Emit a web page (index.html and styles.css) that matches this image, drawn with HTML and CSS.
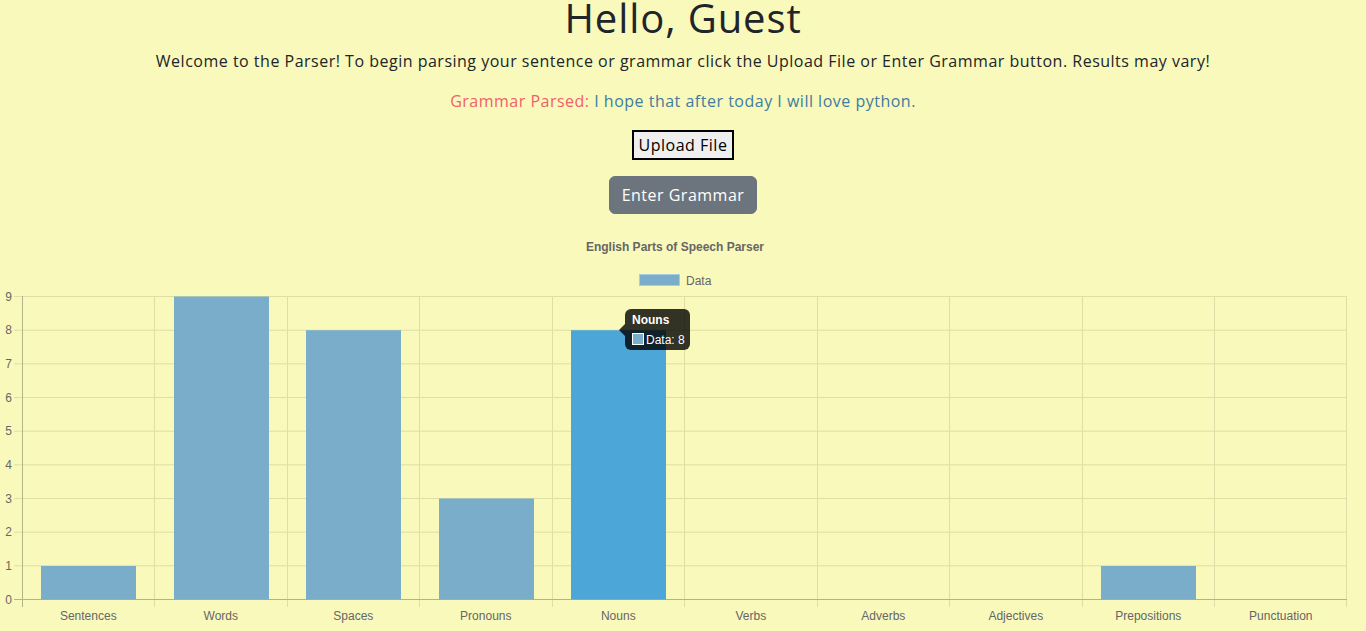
FILE: index.html
```html
<!DOCTYPE html>
<html lang="en">
<head>
<meta charset="utf-8">
<title>Parser</title>
<link rel="stylesheet" href="styles.css">
</head>
<body>
<main class="page">
  <h1 class="title">Hello, Guest</h1>
  <p class="intro">Welcome to the Parser! To begin parsing your sentence or grammar click the Upload File or Enter Grammar button. Results may vary!</p>
  <p class="parsed"><span class="parsed-label">Grammar Parsed:</span> <span class="parsed-text">I hope that after today I will love python.</span></p>
  <div class="upload-row"><button class="upload-btn" type="button">Upload File</button></div>
  <div class="enter-row"><button class="enter-btn" type="button">Enter Grammar</button></div>
  <div class="chart">
    <svg class="chart-svg" width="1366" height="402" viewBox="0 0 1366 402" xmlns="http://www.w3.org/2000/svg">
      <g transform="translate(0,-229)" font-family="'Liberation Sans', Arial, sans-serif" font-size="12" fill="#666">
        <text x="675" y="250.5" text-anchor="middle" font-weight="bold">English Parts of Speech Parser</text>
        <rect x="639.5" y="274.5" width="40" height="11" fill="#79adca" stroke="#a9cde0" stroke-width="1"/>
        <text x="686" y="284.5">Data</text>

        <g stroke="#dedea6" stroke-width="1">
          <line x1="14" y1="296.5" x2="1347" y2="296.5"/>
          <line x1="14" y1="330.2" x2="1347" y2="330.2"/>
          <line x1="14" y1="363.8" x2="1347" y2="363.8"/>
          <line x1="14" y1="397.5" x2="1347" y2="397.5"/>
          <line x1="14" y1="431.2" x2="1347" y2="431.2"/>
          <line x1="14" y1="464.8" x2="1347" y2="464.8"/>
          <line x1="14" y1="498.5" x2="1347" y2="498.5"/>
          <line x1="14" y1="532.2" x2="1347" y2="532.2"/>
          <line x1="14" y1="565.8" x2="1347" y2="565.8"/>
          <line x1="154.5" y1="296" x2="154.5" y2="607"/>
          <line x1="287.5" y1="296" x2="287.5" y2="607"/>
          <line x1="419.5" y1="296" x2="419.5" y2="607"/>
          <line x1="552.5" y1="296" x2="552.5" y2="607"/>
          <line x1="684.5" y1="296" x2="684.5" y2="607"/>
          <line x1="817.5" y1="296" x2="817.5" y2="607"/>
          <line x1="949.5" y1="296" x2="949.5" y2="607"/>
          <line x1="1082.5" y1="296" x2="1082.5" y2="607"/>
          <line x1="1214.5" y1="296" x2="1214.5" y2="607"/>
          <line x1="1346.5" y1="296" x2="1346.5" y2="607"/>
        </g>
        <g stroke="#b4b48a" stroke-width="1">
          <line x1="22.5" y1="296" x2="22.5" y2="607"/>
          <line x1="14" y1="599.5" x2="1347" y2="599.5"/>
        </g>

        <g fill="#79adca">
          <rect x="41" y="566" width="95" height="33.5"/>
          <rect x="174" y="296.5" width="95" height="303"/>
          <rect x="306" y="330.2" width="95" height="269.3"/>
          <rect x="439" y="498.5" width="95" height="101"/>
          <rect x="1101" y="566" width="95" height="33.5"/>
        </g>
        <rect x="571" y="330.2" width="95" height="269.3" fill="#4ca6d8"/>

        <g text-anchor="end">
          <text x="12" y="300.5">9</text>
          <text x="12" y="334.2">8</text>
          <text x="12" y="367.8">7</text>
          <text x="12" y="401.5">6</text>
          <text x="12" y="435.2">5</text>
          <text x="12" y="468.8">4</text>
          <text x="12" y="502.5">3</text>
          <text x="12" y="536.2">2</text>
          <text x="12" y="569.8">1</text>
          <text x="12" y="603.5">0</text>
        </g>
        <g text-anchor="middle">
          <text x="88.3" y="620">Sentences</text>
          <text x="220.8" y="620">Words</text>
          <text x="353.3" y="620">Spaces</text>
          <text x="485.8" y="620">Pronouns</text>
          <text x="618.3" y="620">Nouns</text>
          <text x="750.8" y="620">Verbs</text>
          <text x="883.3" y="620">Adverbs</text>
          <text x="1015.8" y="620">Adjectives</text>
          <text x="1148.3" y="620">Prepositions</text>
          <text x="1280.8" y="620">Punctuation</text>
        </g>

        <g class="tooltip">
          <path d="M619 330 L625 324 L625 336 Z" fill="rgba(0,0,0,0.8)"/>
          <rect x="625" y="309" width="65" height="41" rx="6" fill="rgba(0,0,0,0.8)"/>
          <text x="632" y="324" fill="#fff" font-weight="bold">Nouns</text>
          <rect x="632" y="333" width="12" height="12" fill="#fff"/>
          <rect x="633" y="334" width="10" height="10" fill="#79adca"/>
          <text x="646" y="343.5" fill="#fff">Data: 8</text>
        </g>
      </g>
    </svg>
  </div>
</main>
</body>
</html>
```

FILE: styles.css
```css
html, body {
  margin: 0;
  padding: 0;
}

body {
  background: #f9f9bb;
  color: #212529;
  font-family: "Open Sans", "DejaVu Sans", sans-serif;
  letter-spacing: 0.5px;
  overflow: hidden;
}

.page {
  text-align: center;
}

.title {
  margin: 0 0 15px;
  padding-top: 1px;
  font-size: 40px;
  line-height: 33px;
  font-weight: 500;
  letter-spacing: 0.9px;
  color: #212529;
}

.intro,
.parsed {
  margin: 0 0 16px;
  font-size: 16px;
  line-height: 24px;
}

.parsed {
  margin-bottom: 17px;
}

.parsed-label {
  color: #f2606c;
}

.parsed-text {
  color: #3f7c9f;
}

.upload-row {
  margin-bottom: 16px;
  line-height: 0;
}

.upload-btn {
  font-family: inherit;
  font-size: 16px;
  line-height: 24px;
  letter-spacing: 0.5px;
  height: 30px;
  padding: 0 5px;
  background: #efefef;
  color: #000;
  border: 2px solid #000;
  border-radius: 0;
}

.enter-row {
  line-height: 0;
  margin-bottom: 15px;
}

.enter-btn {
  font-family: inherit;
  font-size: 16px;
  line-height: 24px;
  letter-spacing: 0.5px;
  padding: 6px 12px;
  height: 38px;
  background: #6c757d;
  color: #fff;
  border: 1px solid #6c757d;
  border-radius: 6px;
}

.chart {
  line-height: 0;
  letter-spacing: 0;
}

.chart-svg {
  display: block;
}
```
